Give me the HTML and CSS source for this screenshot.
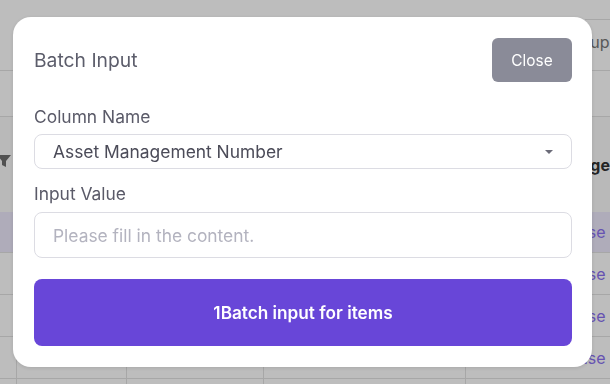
FILE: index.html
```html
<!DOCTYPE html>
<html lang="en">
<head>
    <meta charset="UTF-8">
    <meta name="viewport" content="width=device-width, initial-scale=1.0">
    <title>Batch Input</title>
    <link rel="stylesheet" href="styles.css">
</head>
<body>
    <div class="page">
        <div class="toolbar">
            <div class="search">Group</div>
        </div>
        <div class="subbar"></div>
        <div class="thead">
            <svg class="filter" width="14" height="12" viewBox="0 0 14 12"><path d="M0 0h14l-5 6v6l-4-2V6z" fill="#6e6e6e"/></svg>
            <div class="col c1"></div>
            <div class="col c2"></div>
            <div class="col c3"></div>
            <div class="col c4"></div>
            <div class="col c5 bold">Manage</div>
        </div>
        <div class="row selected">
            <div class="col c1"></div><div class="col c2"></div><div class="col c3"></div><div class="col c4"></div>
            <div class="col c5 link">Release</div>
        </div>
        <div class="row">
            <div class="col c1"></div><div class="col c2"></div><div class="col c3"></div><div class="col c4"></div>
            <div class="col c5 link">Release</div>
        </div>
        <div class="row">
            <div class="col c1"></div><div class="col c2"></div><div class="col c3"></div><div class="col c4"></div>
            <div class="col c5 link">Release</div>
        </div>
        <div class="row">
            <div class="col c1"></div><div class="col c2"></div><div class="col c3"></div><div class="col c4"></div>
            <div class="col c5 link">Release</div>
        </div>
        <div class="row">
            <div class="col c1"></div><div class="col c2"></div><div class="col c3"></div><div class="col c4"></div>
            <div class="col c5"></div>
        </div>
    </div>

    <div class="overlay">
        <div class="modal">
            <div class="modal-head">
                <h2>Batch Input</h2>
                <button class="close-btn">Close</button>
            </div>
            <label class="field-label">Column Name</label>
            <div class="select">
                <span>Asset Management Number</span>
                <svg width="10" height="6" viewBox="0 0 10 6"><path d="M1 1h8L5 5z" fill="#6b6b78"/></svg>
            </div>
            <label class="field-label second">Input Value</label>
            <input class="text-input" type="text" placeholder="Please fill in the content.">
            <button class="submit-btn">1Batch input for items</button>
        </div>
    </div>
</body>
</html>
```

FILE: styles.css
```css
* {
    box-sizing: border-box;
}

body {
    margin: 0;
    font-family: Inter, "Noto Sans", sans-serif;
    background-color: #fff;
    overflow: hidden;
}

.page {
    width: 610px;
    height: 384px;
    overflow: hidden;
}

.toolbar {
    height: 71px;
    border-bottom: 1px solid #e2e2e2;
    display: flex;
    justify-content: flex-end;
    padding-top: 19px;
}

.search {
    width: 25px;
    height: 52px;
    border-top: 1px solid #e2e2e2;
    font-size: 16px;
    color: #777;
    padding: 12px 0 0 0;
    text-indent: -22px;
    overflow: hidden;
    white-space: nowrap;
}

.subbar {
    height: 46px;
    border-bottom: 1px solid #e2e2e2;
}

.thead {
    height: 95px;
    display: flex;
    align-items: center;
    position: relative;
    background-color: #fafafa;
}

.filter {
    position: absolute;
    left: -3px;
    top: 38px;
}

.row {
    height: 42px;
    display: flex;
    align-items: center;
    border-bottom: 1px solid #e2e2e2;
}

.row.selected {
    background-color: #ece8fb;
    height: 41px;
}

.col {
    height: 100%;
    border-right: 1px solid #e2e2e2;
    display: flex;
    align-items: center;
}

.c1 { width: 17px; }
.c2 { width: 110px; }
.c3 { width: 137px; }
.c4 { width: 202px; }
.c5 {
    flex: 1;
    border-right: none;
    padding-left: 80px;
    font-size: 16px;
    white-space: nowrap;
}

.bold {
    font-weight: 700;
    color: #333;
}

.thead .c5 {
    padding-left: 95px;
}

.link {
    color: #8a6ff0;
}

.overlay {
    position: fixed;
    inset: 0;
    background-color: rgba(0, 0, 0, 0.26);
    padding: 17px 0 0 13px;
}

.modal {
    width: 579px;
    height: 350px;
    background-color: #fff;
    border-radius: 18px;
    box-shadow: 0 1px 4px rgba(0, 0, 0, 0.12);
    padding: 21px 20px 21px 21px;
}

.modal-head {
    display: flex;
    justify-content: space-between;
    align-items: center;
    height: 44px;
}

.modal-head h2 {
    margin: 0;
    font-size: 19.3px;
    font-weight: 400;
    color: #5c5d6b;
}

.close-btn {
    width: 80px;
    height: 44px;
    border: none;
    border-radius: 6px;
    background-color: #8a8b98;
    color: #fff;
    font-family: inherit;
    font-size: 15.4px;
}

.field-label {
    display: block;
    margin-top: 23px;
    font-size: 17.4px;
    line-height: 24px;
    color: #5a5a68;
}

.field-label.second {
    margin-top: 13px;
}

.select {
    margin-top: 5px;
    height: 35px;
    border: 1px solid #dcdce3;
    border-radius: 8px;
    display: flex;
    align-items: center;
    justify-content: space-between;
    padding: 0 17px 0 18px;
    font-size: 17.4px;
    color: #4b4b58;
}

.text-input {
    display: block;
    width: 100%;
    margin-top: 6px;
    height: 46px;
    border: 1px solid #dcdce3;
    border-radius: 8px;
    padding: 0 18px;
    font-family: inherit;
    font-size: 17.4px;
    outline: none;
}

.text-input::placeholder {
    color: #b3b3bf;
}

.submit-btn {
    display: block;
    width: 100%;
    margin-top: 21px;
    height: 67px;
    border: none;
    border-radius: 8px;
    background-color: #6846d8;
    color: #fff;
    font-family: inherit;
    font-size: 17.2px;
    font-weight: 600;
}
```
